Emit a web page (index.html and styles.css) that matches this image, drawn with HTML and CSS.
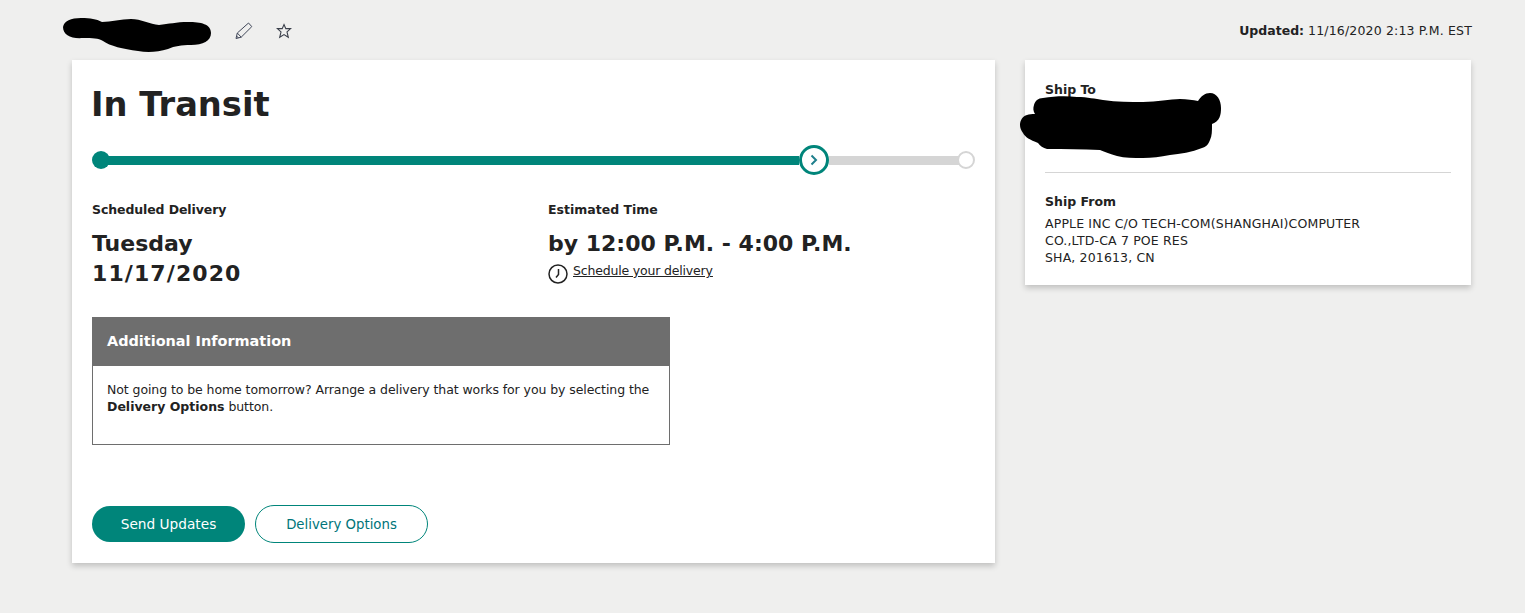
FILE: index.html
```html
<!DOCTYPE html>
<html lang="en">
<head>
<meta charset="utf-8">
<title>In Transit</title>
<link rel="stylesheet" href="styles.css">
</head>
<body>
<header class="top">
  <svg class="blob-name" width="150" height="35" viewBox="0 0 150 35"><path d="M0 9C1 3 8 0 18 0C28 0 33 1 39 4C48 4 58 1 68 1C78 1 87 6 96 7C106 6 113 4 125 4C138 4 148 6 148 15C148 23 140 27 128 27C118 27 112 28 105 31C95 34 85 35 75 33C60 31 47 28 40 23C35 20 30 20 20 20C8 21 0 17 0 9Z" fill="#000"/></svg>
  <button class="icon-btn edit" aria-label="Edit">
    <svg width="18" height="18" viewBox="0 0 18 18" fill="none" stroke="#3f4658" stroke-width="1"><path d="M1 16.500L2.300 11L13.500 1L16.800 4.600L6.200 15.200ZM2.300 11L6.200 15.200M1.600 14L3.500 16"/></svg>
  </button>
  <button class="icon-btn star" aria-label="Favorite">
    <svg width="16" height="16" viewBox="0 0 16 16" fill="none" stroke="#3a3f4a" stroke-width="1.100"><path d="M8 1.500L9.800 5.600H14.600L11 8.900L12.300 14.300L8 11.600L3.700 14.300L5 8.900L1.400 5.600H6.200Z"/></svg>
  </button>
  <p class="updated"><b>Updated:</b> <span class="updated-val">11/16/2020 2:13 P.M. EST</span></p>
</header>
<main class="layout">
  <section class="card main-card">
    <h1>In Transit</h1>
    <div class="progress">
      <span class="dot-start"></span>
      <span class="seg-done"></span>
      <span class="current">
        <svg width="10" height="12" viewBox="0 0 10 12" fill="none" stroke="#1f7f8c" stroke-width="2"><path d="M2.500 1.500L7 6L2.500 10.500"/></svg>
      </span>
      <span class="seg-todo"></span>
      <span class="dot-end"></span>
    </div>
    <div class="delivery">
      <div class="col-day">
        <h2 class="tight">Scheduled Delivery</h2>
        <p class="big">Tuesday<br><span class="date">11/17/2020</span></p>
      </div>
      <div class="col-time">
        <h2>Estimated Time</h2>
        <p class="big">by 12:00 P.M. - 4:00 P.M.</p>
        <a class="sched" href="#">
          <svg width="20" height="20" viewBox="0 0 20 20" fill="none" stroke="#222" stroke-width="1.500"><circle cx="10" cy="10" r="9"/><path d="M10.500 5V10.500L8 13.500"/></svg>
          <span>Schedule your delivery</span>
        </a>
      </div>
    </div>
    <div class="info">
      <div class="info-head">Additional Information</div>
      <p class="info-body">Not going to be home tomorrow? Arrange a delivery that works for you by selecting the <b>Delivery Options</b> button.</p>
    </div>
    <div class="actions">
      <a class="btn primary" href="#">Send Updates</a>
      <a class="btn outline" href="#">Delivery Options</a>
    </div>
  </section>
  <aside class="card side-card">
    <div class="ship-to">
      <h2>Ship To</h2>
      <svg class="blob-addr" width="202" height="66" viewBox="0 0 202 66"><path d="M14 12C15 8 18 5 23 5C35 3 47 3 57 4C68 4 75 6 83 7C97 9 110 9 123 9C137 9 150 6 160 6C167 6 173 7 178 8C181 3 185 0 190 0C197 0 201 7 201 15C201 22 200 28 192 31C192 38 192 43 190 47C188 52 186 54 182 55C172 59 160 61 150 62C140 64 132 65 123 65C113 65 105 65 97 63C90 61 85 59 80 57C62 56 45 56 27 56C23 55 20 53 18 50C10 47 5 44 3 40C1 37 0 35 0 32C0 27 3 23 7 22C9 21 12 21 15 21C13 18 13 15 14 12Z" fill="#000"/></svg>
    </div>
    <div class="ship-from">
      <h2>Ship From</h2>
      <p>APPLE INC C/O TECH-COM(SHANGHAI)COMPUTER<br>CO.,LTD-CA 7 POE RES<br>SHA, 201613, CN</p>
    </div>
  </aside>
</main>
</body>
</html>
```
FILE: styles.css
```css
* { box-sizing: border-box; }
html, body { margin: 0; height: 100%; }
body {
  background: #efefee;
  color: #222;
  font-family: "DejaVu Sans", Verdana, sans-serif;
  font-size: 12.500px;
  overflow: hidden;
}
h1, h2, p { margin: 0; }
.top {
  display: flex;
  align-items: flex-start;
  height: 60px;
  padding: 18px 53px 0 63px;
}
.blob-name { flex: none; }
.icon-btn {
  background: none;
  border: 0;
  padding: 0;
  display: flex;
}
.edit { margin: 4px 0 0 22px; }
.star { margin: 5px 0 0 23px; }
.updated {
  margin-left: auto;
  padding-top: 5px;
  line-height: 16px;
}
.updated-val { letter-spacing: .17px; }
.layout {
  display: flex;
  align-items: flex-start;
  gap: 30px;
  padding-left: 72px;
}
.card {
  background: #fff;
  box-shadow: 0 3px 6px rgba(0, 0, 0, .2);
}
.main-card {
  width: 923px;
  height: 503px;
  padding: 24px 20px 0;
}
h1 {
  font-size: 33.700px;
  line-height: 42px;
  font-weight: 700;
  margin-left: -1px;
}
.progress {
  display: flex;
  align-items: center;
  height: 30px;
  margin: 19px 0 0;
}
.dot-start {
  flex: none;
  width: 18px;
  height: 18px;
  border-radius: 50%;
  background: #00857a;
  margin-right: -2px;
}
.seg-done { flex: none; width: 691px; height: 9px; background: #00857a; }
.seg-todo { flex: 1; height: 9px; background: #d5d5d5; }
.current {
  flex: none;
  width: 30px;
  height: 30px;
  border-radius: 50%;
  border: 3px solid #00857a;
  background: #fff;
  display: flex;
  align-items: center;
  justify-content: center;
}
.dot-end {
  flex: none;
  width: 18px;
  height: 18px;
  margin-left: -2px;
  border-radius: 50%;
  background: #fff;
  border: 2px solid #d5d5d5;
}
.delivery {
  display: flex;
  margin-top: 26px;
}
.col-day { width: 456px; }
h2 {
  font-size: 12.500px;
  line-height: 17px;
  font-weight: 700;
}
.tight { letter-spacing: -.1px; }
.big {
  font-size: 22px;
  font-weight: 700;
  line-height: 30px;
  margin-top: 11px;
}
.date { letter-spacing: 1.100px; }
.sched {
  display: flex;
  align-items: flex-start;
  gap: 5px;
  color: #222;
  margin-top: 5px;
}
.sched span {
  text-decoration: underline;
  line-height: 16px;
  letter-spacing: -.18px;
  margin-top: -1px;
}
.info {
  width: 578px;
  height: 128px;
  margin-top: 28px;
  border: 1px solid #6e6e6e;
}
.info-head {
  background: #6e6e6e;
  color: #fff;
  font-size: 14.450px;
  font-weight: 700;
  height: 48px;
  line-height: 47px;
  padding-left: 14px;
}
.info-body {
  padding: 15px 14px 0;
  line-height: 17px;
  letter-spacing: -.08px;
}
.info-body b { letter-spacing: 0; }
.actions {
  display: flex;
  align-items: center;
  gap: 10px;
  margin-top: 60px;
}
.btn {
  display: flex;
  align-items: center;
  justify-content: center;
  border-radius: 19px;
  text-decoration: none;
}
.primary { width: 153px; height: 36px; background: #00857a; color: #fff; font-size: 13.700px; }
.outline { width: 173px; height: 38px; background: #fff; border: 1px solid #00857a; color: #00757a; font-size: 13.300px; }
.side-card {
  width: 446px;
  height: 225px;
  padding: 21px 20px 0;
}
.ship-to {
  position: relative;
  height: 92px;
  border-bottom: 1px solid #d5d5d5;
}
.blob-addr {
  position: absolute;
  left: -25px;
  top: 12px;
}
.ship-from { padding-top: 20px; }
.ship-from p { margin-top: 5px; line-height: 17px; letter-spacing: .15px; }
```
